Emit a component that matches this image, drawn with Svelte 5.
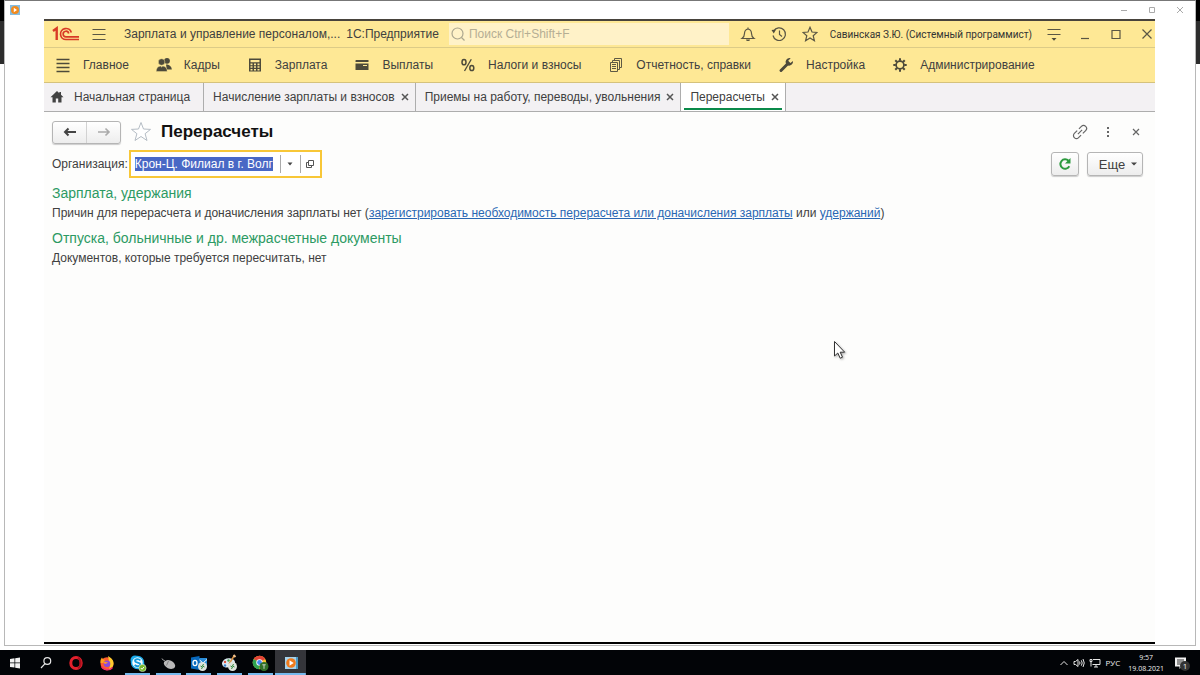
<script>
  import { onMount } from 'svelte';

  let orgInput;
  let organization = $state('Крон-Ц. Филиал в г. Волг');

  const sections = [
    { icon: 'lines', label: 'Главное' },
    { icon: 'people', label: 'Кадры' },
    { icon: 'calc', label: 'Зарплата' },
    { icon: 'card', label: 'Выплаты' },
    { icon: 'percent', label: 'Налоги и взносы' },
    { icon: 'docs', label: 'Отчетность, справки' },
    { icon: 'wrench', label: 'Настройка' },
    { icon: 'gear', label: 'Администрирование' }
  ];

  const tabs = [
    { label: 'Начисление зарплаты и взносов' },
    { label: 'Приемы на работу, переводы, увольнения' },
    { label: 'Перерасчеты', active: true }
  ];

  const tasks = [
    { icon: 'windows', name: 'Пуск' },
    { icon: 'search', name: 'Поиск' },
    { icon: 'opera', name: 'Opera' },
    { icon: 'firefox', name: 'Firefox' },
    { icon: 'skype', name: 'Skype', open: true },
    { icon: 'mouse', name: 'Мышь', open: true },
    { icon: 'outlook', name: 'Outlook', open: true },
    { icon: 'paint', name: 'Paint', open: true },
    { icon: 'chrome', name: 'Chrome', open: true },
    { icon: 'player', name: 'Проигрыватель', open: true, active: true }
  ];

  onMount(() => {
    orgInput.focus({ preventScroll: true });
    orgInput.setSelectionRange(0, organization.length, 'backward');
  });
</script>

{#snippet sectionIcon(name)}
  <svg class="section-icon" viewBox="0 0 20 20" aria-hidden="true">
    {#if name === 'lines'}
      <path d="M3.500 4.500h13M3.500 8.500h13M3.500 12.500h13M3.500 16.500h13" stroke="#4d4a3a" stroke-width="1.700" fill="none" />
    {:else if name === 'people'}
      <g fill="#4d4a3a">
        <circle cx="13" cy="5.800" r="2.900" />
        <path d="M12 9.500c3 0 5.500 1.500 5.800 5h-5z" />
        <circle cx="7.600" cy="7" r="3.300" stroke="#fee895" stroke-width=".5" />
        <path d="M2.200 16.500c0-3.500 1.800-5 4.300-5.400l1.100 1 1.200-1c2.700.4 4.400 2 4.400 5.400z" stroke="#fee895" stroke-width=".4" />
      </g>
    {:else if name === 'calc'}
      <path fill="#4d4a3a" fill-rule="evenodd" d="M4 3.500h12v13H4zM5.500 5v2.200h9V5zM5.500 8.600v1.600h2V8.600zm3.500 0v1.600h2V8.600zm3.500 0v1.600h2V8.600zM5.500 11.300v1.500h2v-1.500zm3.500 0v1.500h2v-1.500zm3.500 0v1.500h2v-1.500zM5.500 14v1.400h2V14zM9 14v1.400h2V14zm3.500 0v1.400h2V14z" />
    {:else if name === 'card'}
      <path fill="#4d4a3a" d="M4 5h12.500v2H3.500V5.500zM3.500 8.500h13V15h-13z" />
      <path d="M11 10.500h4" stroke="#fee895" />
    {:else if name === 'percent'}
      <g fill="none" stroke="#4d4a3a">
        <ellipse cx="6" cy="7.200" rx="2" ry="2.600" stroke-width="1.500" />
        <ellipse cx="13.800" cy="13" rx="2" ry="2.600" stroke-width="1.500" />
        <path d="M13.300 4.200 6.500 16" stroke-width="1.300" />
      </g>
    {:else if name === 'docs'}
      <g fill="#fee895" stroke="#5d5944">
        <path d="M8.500 3.500h7v9h-7z" /><path d="M6.500 5.500h7v9h-7z" /><path d="M4.500 7.500h7v9h-7z" />
        <path d="M6 9.500h4M6 11.500h4M6 13.500h4" />
      </g>
    {:else if name === 'wrench'}
      <path d="M5 15.500 11.500 9" stroke="#4d4a3a" stroke-width="3" stroke-linecap="round" />
      <path fill="#4d4a3a" d="M13.500 3a4 4 0 0 0-3.700 5.300L12 10.500a4 4 0 0 0 5-4.500l-2.600 2-2.200-2.200L14.700 3.300z" />
    {:else if name === 'gear'}
      <circle cx="10" cy="10" r="3.900" fill="none" stroke="#4d4a3a" stroke-width="1.700" />
      <g stroke="#4d4a3a" stroke-width="2">
        {#each [0, 45, 90, 135, 180, 225, 270, 315] as a}
          <path d="M10 3.300v2.500" transform="rotate({a} 10 10)" />
        {/each}
      </g>
    {/if}
  </svg>
{/snippet}

{#snippet taskIcon(name)}
  <svg width="18" height="18" viewBox="0 0 18 18" aria-hidden="true">
    {#if name === 'windows'}
      <path fill="#f2f2f2" d="M4 5l4.500-.7v4.300H4zM9.200 4.200 14 3.500v5.100H9.200zM4 9.300h4.500v4.300L4 13zM9.200 9.300H14v5.100l-4.800-.7z" />
    {:else if name === 'search'}
      <g fill="none" stroke="#e6e6e6" stroke-width="1.200"><circle cx="10.300" cy="7" r="3.400" /><path d="M8 9.600 4 14" /></g>
    {:else if name === 'opera'}
      <ellipse cx="9" cy="9" rx="5.200" ry="5.600" fill="none" stroke="#e3202c" stroke-width="3" />
      <path d="M11 3.800c3.500 2 3.500 8.400 0 10.400" fill="none" stroke="#a90f1c" stroke-width="2" />
    {:else if name === 'firefox'}
      <circle cx="9" cy="9.700" r="6.500" fill="#ff5b2e" />
      <path d="M10 2c3 2 6 4 5.500 8-.3 3.500-3 5.500-5.500 6 2-3 3-5 1-9z" fill="#ffcb2e" />
      <path d="M2.500 9C2 6.500 3 4.500 4 3.500c.5 1.500 1.500 2 3 2.500L5 9z" fill="#ffa01f" />
      <circle cx="9" cy="9.700" r="3.300" fill="#8a49dd" />
      <path d="M5 8c2-1 3 .5 5 .3-1 1.500-2 1.200-3 1.700z" fill="#ff9a22" />
      <path d="M3.500 12.500c2 4 8 4.500 11 1" fill="none" stroke="#f22e68" stroke-width="1.500" />
    {:else if name === 'skype'}
      <circle cx="6" cy="6" r="4.500" fill="#19a9e8" /><circle cx="11" cy="11" r="4.500" fill="#19a9e8" />
      <circle cx="8.500" cy="8.500" r="6" fill="#f3fbff" stroke="#19a9e8" stroke-width="1.500" />
      <path d="M11.300 6.500C10 4.500 6 5 6 7s5.300 1.300 5.300 3.400S7.200 13 5.800 10.800" fill="none" stroke="#149bdc" stroke-width="1.800" />
      <circle cx="13.500" cy="14" r="3.600" fill="#76b82a" stroke="#e8f3dc" stroke-width=".6" />
      <path d="m11.800 14 1.300 1.300 2-2.500" stroke="#fff" fill="none" />
    {:else if name === 'mouse'}
      <path d="M3 4.500C4 7 5 5.500 6.500 7.500" stroke="#aaa" fill="none" />
      <ellipse cx="10.500" cy="10.500" rx="6" ry="4" fill="#b9b9b9" transform="rotate(24 10.500 10.500)" />
      <path d="M9.500 7 7.500 11.500" stroke="#777" stroke-width=".8" />
    {:else if name === 'outlook'}
      <path fill="#2a8dd8" d="M8 4h9v9H8z" /><path d="m9 5.500 4 3.500 4-3.500" stroke="#fff" fill="none" />
      <path fill="#0869bd" d="M1 3.500 9.500 2v14L1 14.500z" />
      <ellipse cx="5" cy="9" rx="2" ry="2.600" fill="none" stroke="#fff" stroke-width="1.300" />
      <circle cx="12.500" cy="12.500" r="4.500" fill="#dfe3dc" /><path d="m10.500 12 2 1-1 2M14.500 13l-2-1 1-2" stroke="#318b3d" fill="none" />
    {:else if name === 'paint'}
      <path d="M2 9c1-4 5-5.500 9-4.500s5 4 3 6-4 0-5 2-7 1.500-7-3.500z" fill="#dceaf3" />
      <circle cx="5" cy="8" r="1.200" fill="#dd503f" /><circle cx="8.500" cy="6.500" r="1.200" fill="#4aa04b" /><circle cx="5" cy="11.500" r="1.200" fill="#3681cc" />
      <path d="m9 10 5-8" stroke="#d99344" stroke-width="1.500" /><path d="m13.500 1 2 2" stroke="#efc28e" stroke-width="2" />
      <circle cx="12.500" cy="12.500" r="4.500" fill="#dfe3dc" /><path d="m10.500 12 2 1-1 2M14.500 13l-2-1 1-2" stroke="#318b3d" fill="none" />
    {:else if name === 'chrome'}
      <circle cx="8.500" cy="8.500" r="6.800" fill="#f5c52c" />
      <path d="M8.500 8.500 2.600 5.100a6.800 6.800 0 0 1 11.800 0z" fill="#e34436" />
      <path d="M8.500 8.500 2.600 5.100a6.800 6.800 0 0 0 5.900 10.200z" fill="#30a350" />
      <circle cx="8.500" cy="8.500" r="3.200" fill="#fff" /><circle cx="8.500" cy="8.500" r="2.400" fill="#4688ef" />
      <circle cx="13" cy="12.500" r="4.500" fill="#2f7027" /><path d="M11.300 10.800h3.400M13 10.800v4" stroke="#eee" stroke-width=".8" />
    {:else if name === 'player'}
      <path d="M4 3h12v12H4z" fill="#4d9bc7" /><path d="M3 3h11v12H3z" fill="#a6d3ed" />
      <circle cx="9" cy="9" r="4.800" fill="#f07b1c" /><path d="m7.500 6.200 4.200 2.800-4.200 2.800z" fill="#fff" />
    {/if}
  </svg>
{/snippet}

<div class="desktop">
  <div class="player">
    <header class="player-bar">
      <svg width="10" height="10" viewBox="0 0 10 10" aria-hidden="true">
        <path d="M0 0h10v10H0z" fill="#86bde0" /><circle cx="5" cy="5" r="4" fill="#f28a1d" /><path d="m3.800 2.800 3.200 2.200-3.200 2.200z" fill="#fff" />
      </svg>
      <div class="player-controls">
        <button aria-label="Свернуть проигрыватель"><svg width="8" height="8" viewBox="0 0 8 8"><path d="M1 4.500h6" /></svg></button>
        <button aria-label="Развернуть проигрыватель"><svg width="8" height="8" viewBox="0 0 8 8"><path d="M1.500 1.500h5v5h-5z" /></svg></button>
        <button aria-label="Закрыть проигрыватель"><svg width="8" height="8" viewBox="0 0 8 8"><path d="m1 1 6 6M7 1 1 7" /></svg></button>
      </div>
    </header>

    <div class="app">
      <header class="titlebar">
        <svg width="28" height="16" viewBox="0 0 28 16" role="img" aria-label="1С">
          <g fill="none" stroke="#d83a26" stroke-width="1.700">
            <path d="M1 5 4.700 2.300V14" stroke-width="2.400" />
            <path d="M19.300 6.500A5.500 5.500 0 1 0 14 13.500h13" />
            <path d="M16.700 7.500A2.800 2.800 0 1 0 14 10.800h13" />
          </g>
        </svg>
        <button class="tool menu" aria-label="Главное меню"><svg viewBox="0 0 16 16"><path d="M1.500 3.500h13M1.500 8.500h13M1.500 13.500h13" /></svg></button>
        <span>Зарплата и управление персоналом,...</span>
        <span class="platform">1С:Предприятие</span>
        <label class="search">
          <svg width="16" height="16" viewBox="0 0 16 16" aria-hidden="true"><circle cx="7.500" cy="7.500" r="5.500" /><path d="m11.500 11.500 3 3" /></svg>
          <input type="search" placeholder="Поиск Ctrl+Shift+F" aria-label="Поиск" />
        </label>
        <div class="tools">
          <button class="tool" aria-label="Уведомления"><svg viewBox="0 0 16 16"><path d="M2 12.500c2-1.500 2.500-3 2.500-5 0-2.500 1-4 3.500-4.500 2.500.5 3.500 2 3.500 4.500 0 2 .5 3.500 2.500 5zM8 3V1.500" /><path d="M6 13.500a2 1.500 0 0 0 4 0z" class="solid" /></svg></button>
          <button class="tool" aria-label="История"><svg viewBox="0 0 16 16"><path d="M2.700 5A6.300 6.300 0 1 1 2 9.500M8.500 4.500V8.500l2.500 2" /><path d="M.5 4 5 3.500 2.800 7.500z" class="solid" /></svg></button>
          <button class="tool" aria-label="Избранное"><svg viewBox="0 0 16 16"><path d="m8 1.300 2 4.700 5 .4-3.800 3.300 1.200 5L8 12l-4.400 2.700 1.200-5L1 6.400l5-.4z" /></svg></button>
        </div>
        <span class="user">Савинская З.Ю. (Системный программист)</span>
        <div class="tools">
          <button class="tool" aria-label="Настройка панели"><svg viewBox="0 0 16 16"><path d="M1.500 3.500h13M1.500 8.500h13" /><path d="M5.500 12h5L8 14.700z" class="solid" /></svg></button>
          <button class="tool" aria-label="Свернуть"><svg viewBox="0 0 16 16"><path d="M4 12.500h8" /></svg></button>
          <button class="tool" aria-label="Развернуть"><svg viewBox="0 0 16 16"><path d="M4 4.500h8v8H4z" /></svg></button>
          <button class="tool" aria-label="Закрыть"><svg viewBox="0 0 16 16"><path d="m3.500 3.500 9 9M12.500 3.500l-9 9" /></svg></button>
        </div>
      </header>

      <nav class="sections" aria-label="Разделы">
        {#each sections as s}
          <button class="section">{@render sectionIcon(s.icon)}<span>{s.label}</span></button>
        {/each}
      </nav>

      <div class="tabs">
        <button class="tab home">
          <svg width="14" height="14" viewBox="0 0 14 14" aria-hidden="true"><path fill="#424242" d="M7 1 .5 7.200h2V12.500h3.300V8.500h2.400v4h3.300V7.200h2L11 4.800V2H9.300v1.200z" /></svg>
          <span>Начальная страница</span>
        </button>
        {#each tabs as t}
          <div class="tab" class:active={t.active}>
            <button>{t.label}</button>
            <button class="tab-close" aria-label="Закрыть вкладку"><svg width="8" height="8" viewBox="0 0 8 8"><path d="m1 1 6 6M7 1 1 7" /></svg></button>
          </div>
        {/each}
      </div>

      <main>
        <div class="page-head">
          <div class="history">
            <button aria-label="Назад"><svg width="14" height="10" viewBox="0 0 14 10"><path d="M1.500 5H13M5.500 1.500 2 5l3.500 3.500" stroke="#444" stroke-width="2" fill="none" /></svg></button>
            <button aria-label="Вперед"><svg width="14" height="10" viewBox="0 0 14 10"><path d="M1 5h11.500M8.500 1.500 12 5 8.500 8.500" stroke="#aaa" stroke-width="1.600" fill="none" /></svg></button>
          </div>
          <button class="favorite" aria-label="В избранное"><svg width="22" height="20" viewBox="0 0 22 20"><path d="m11 .5 2.500 6.500 7 .4-5.400 4.300 1.900 6.800-6-4-6 4 1.900-6.800L1.500 7.400l7-.4z" fill="#fff" stroke="#b4bcc4" /></svg></button>
          <h1>Перерасчеты</h1>
          <div class="page-tools">
            <button aria-label="Получить ссылку"><svg width="16" height="16" viewBox="0 0 16 16"><g transform="rotate(-45 8 8)" fill="none" stroke="#666" stroke-width="1.200"><path d="M7 5H3a3 3 0 0 0 0 6h3.500M9 11h4a3 3 0 0 0 0-6H9.500M5 8h6" /></g></svg></button>
            <button aria-label="Дополнительно"><svg width="16" height="16" viewBox="0 0 16 16"><path d="M7 3h2v2H7zM7 7h2v2H7zM7 11h2v2H7z" fill="#666" /></svg></button>
            <button aria-label="Закрыть форму"><svg width="16" height="16" viewBox="0 0 16 16"><path d="m5 5 6 6M11 5l-6 6" stroke="#666" stroke-width="1.200" /></svg></button>
          </div>
        </div>

        <div class="command-row">
          <label for="organization">Организация:</label>
          <div class="field">
            <input id="organization" bind:this={orgInput} bind:value={organization} spellcheck="false" autocomplete="off" />
            <button aria-label="Выбрать из списка"><svg width="6" height="4" viewBox="0 0 6 4"><path d="M.5.500h5L3 3.500z" fill="#444" /></svg></button>
            <button aria-label="Открыть"><svg width="10" height="10" viewBox="0 0 10 10"><path d="M3.500 1.500h5v5h-5zM3.500 3.500h-2v5h5v-2" fill="none" stroke="#555" /></svg></button>
          </div>
          <div class="commands">
            <button class="command refresh" aria-label="Обновить"><svg width="14" height="14" viewBox="0 0 14 14"><path d="M11.300 9.200A4.700 4.700 0 1 1 10.500 3.800" fill="none" stroke="#2c9a3e" stroke-width="2" /><path d="M12.500 1v5.500H7z" fill="#2c9a3e" /></svg></button>
            <button class="command more">Еще <svg width="6" height="4" viewBox="0 0 6 4" aria-hidden="true"><path d="M0 .5h6L3 3.500z" fill="#444" /></svg></button>
          </div>
        </div>

        <section>
          <h2>Зарплата, удержания</h2>
          <p>Причин для перерасчета и доначисления зарплаты нет (<a href="#register">зарегистрировать необходимость перерасчета или доначисления зарплаты</a> или <a href="#deductions">удержаний</a>)</p>
        </section>
        <section>
          <h2>Отпуска, больничные и др. межрасчетные документы</h2>
          <p>Документов, которые требуется пересчитать, нет</p>
        </section>
      </main>
    </div>
  </div>

  <footer class="taskbar">
    <div class="tasks">
      {#each tasks as t}
        <button class="task" class:open={t.open} class:active={t.active} aria-label={t.name}>{@render taskIcon(t.icon)}</button>
      {/each}
    </div>
    <div class="tray">
      <svg width="10" height="10" viewBox="0 0 10 10" aria-hidden="true"><path d="m1.500 7 3.500-3.500L8.500 7" /></svg>
      <svg width="12" height="10" viewBox="0 0 12 10" aria-hidden="true"><path d="M1 3.500h1.500L5 1.500v7L2.500 6.500H1zM6.500 3.500q1 1.500 0 3M8.300 2.300q1.800 2.700 0 5.400M10 1q2.500 4 0 8" /></svg>
      <svg width="12" height="10" viewBox="0 0 12 10" aria-hidden="true"><path d="M4 1.500h7v5H3.500M1 1.500h2v2H1zM2 3.500v5M5 9h4M7 6.500V9" /></svg>
      <span class="lang">РУС</span>
      <div class="clock"><span>9:57</span><span>19.08.2021</span></div>
      <div class="notice">
        <svg width="14" height="14" viewBox="0 0 14 14" aria-hidden="true"><path d="M1 1.500h11v9H8L5.500 13v-2.500H1z" fill="#f2f2f2" stroke="none" /><path d="M3 4h7M3 6h7M3 8h4" stroke="#333" /></svg>
        <span class="count">1</span>
      </div>
    </div>
  </footer>

  <svg class="pointer" width="14" height="20" viewBox="0 0 14 20" aria-hidden="true"><path d="M1.500 1.500v14.500l3.300-3 2.400 5.200 2.300-1-2.300-5h4.500z" fill="#fff" stroke="#333" /></svg>
</div>

<style>
  :global(body) { margin: 0; }
  :global(*) { box-sizing: border-box; }
  button { margin: 0; padding: 0; border: 0; background: none; font: inherit; color: inherit; display: flex; align-items: center; justify-content: center; }
  input { font: inherit; color: inherit; border: 0; outline: 0; margin: 0; padding: 0; background: none; min-width: 0; }
  svg { display: block; flex: none; }

  .desktop {
    position: relative;
    min-height: 100vh;
    display: flex;
    flex-direction: column;
    font-family: "Liberation Sans", Arial, sans-serif;
    font-size: 12px;
    color: #404040;
    background: linear-gradient(#000 21px, #2d2d2d 21px, #2d2d2d 64px, #fff 64px);
  }
  .player {
    flex: 1;
    display: flex;
    flex-direction: column;
    margin: 0 4px 4px;
    border: 1px solid #b8b8b8;
    border-top-color: #777;
    background: #fff;
  }
  .player-bar { height: 18px; display: flex; align-items: center; justify-content: space-between; padding: 0 11px 0 5px; }
  .player-controls { display: flex; gap: 20px; }
  .player-controls svg { fill: none; stroke: #aaa; }

  .app {
    flex: 1;
    display: flex;
    flex-direction: column;
    margin: 0 40px 1px 39px;
    border-top: 2px solid #48433c;
    border-bottom: 2px solid #000;
    background: #fdfdfc;
  }
  .titlebar { height: 27px; display: flex; align-items: center; padding-left: 8px; background: #fee895; border-bottom: 1px solid #dccb87; white-space: nowrap; }
  .tool svg { width: 16px; height: 16px; fill: none; stroke: #5a5644; stroke-width: 1.2; }
  .tool svg .solid { fill: #4d4a3a; stroke: none; }
  .menu { margin: 0 17px 0 11px; }
  .platform { margin: 0 10px 0 6px; }
  .search { flex: 1; min-width: 0; height: 22px; display: flex; align-items: center; gap: 3px; padding-left: 1px; background: #fff2c8; }
  .search svg { fill: none; stroke: #aca78f; stroke-width: 1.2; }
  .search input { flex: 1; }
  .search input::placeholder { color: #b5ae94; opacity: 1; }
  .tools { display: flex; gap: 15px; }
  .user { margin: 0 14px 0 12px; font-family: Roboto, sans-serif; font-size: 10px; color: #333; }
  .search + .tools { margin-left: 11px; }

  .sections { display: flex; gap: 25px; height: 35px; padding-left: 9px; align-items: center; background: #fee895; border-bottom: 1px solid #d5c27c; white-space: nowrap; }
  .section { gap: 10px; }
  .section-icon { width: 20px; height: 20px; }

  .tabs { display: flex; height: 29px; background: #f3f1f3; border-bottom: 1px solid #adadad; white-space: nowrap; }
  .tab { display: flex; align-items: center; gap: 6px; padding: 0 6px 0 9px; border-right: 1px solid #adadad; }
  .tab.home { gap: 10px; padding: 0 13px 0 6px; }
  .tab-close svg { stroke: #555; stroke-width: 1.5; }
  .tab.active { background: linear-gradient(#0a8a4a, #0a8a4a) 3px 25px / calc(100% - 6px) 2px no-repeat #fff; }

  main { flex: 1; padding: 8px 8px 0; }
  .page-head { display: flex; align-items: center; height: 24px; }
  .history { display: flex; width: 69px; height: 23px; border: 1px solid #b5b5b5; border-radius: 3px; background: linear-gradient(#fff, #ededed); box-shadow: 0 1px 1px #ccc; }
  .history button { flex: 1; }
  .history button + button { border-left: 1px solid #d2d2d2; }
  .favorite { margin: 0 9px; }
  h1 { margin: 0; font-size: 17px; line-height: 24px; font-weight: 700; color: #111; }
  .page-tools { display: flex; gap: 12px; margin-left: auto; padding-right: 3px; }

  .command-row { display: flex; align-items: center; margin-top: 6px; }
  .field { display: flex; align-items: stretch; width: 193px; height: 28px; margin-left: 1px; padding: 3px 0; border: 2px solid #f8c737; background: #fff; }
  .field input { flex: 1; margin-left: 4px; }
  .field input::selection { background: #4968c5; color: #fff; }
  .field button { width: 20px; border-left: 1px solid #aaa; }
  .commands { display: flex; gap: 8px; margin-left: auto; padding-right: 4px; }
  .command { height: 24px; border: 1px solid #b5b5b5; border-radius: 3px; background: linear-gradient(#fff, #ededed); box-shadow: 0 1px 1px #ccc; }
  .refresh { width: 28px; }
  .more { width: 56px; gap: 6px; padding-left: 6px; font-size: 13px; }

  section { margin-bottom: 5px; }
  .command-row + section { margin-top: 5px; }
  h2 { margin: 0; font-size: 14px; line-height: 20px; font-weight: 400; color: #2c9a63; }
  p { margin: 0; line-height: 20px; }
  a { color: #2967b3; }

  .taskbar { display: flex; justify-content: space-between; height: 25px; background: #020407; color: #eee; }
  .tasks { display: grid; grid-template-columns: repeat(10, 1fr); width: 306px; }
  .task.open { background: linear-gradient(#76b9ed, #76b9ed) center bottom / 25px 2px no-repeat; }
  .task.active { background: linear-gradient(#76b9ed, #76b9ed) center bottom / 100% 2px no-repeat #34353a; }
  .tray { display: flex; align-items: center; gap: 4px; padding-right: 12px; font-family: "Open Sans", "Noto Sans", sans-serif; font-size: 8px; }
  .tray svg { fill: none; stroke: #e6e6e6; }
  .lang { margin-left: 1px; }
  .clock { display: flex; flex-direction: column; align-items: center; margin: 0 6px 0 4px; font-size: 7px; line-height: 11px; }
  .notice { position: relative; }
  .count { position: absolute; left: 6px; top: 5px; width: 10px; height: 10px; border-radius: 50%; background: #333; line-height: 10px; text-align: center; }

  .pointer { position: absolute; left: 833px; top: 340px; filter: drop-shadow(1px 1px 1px #aaa); }
</style>
